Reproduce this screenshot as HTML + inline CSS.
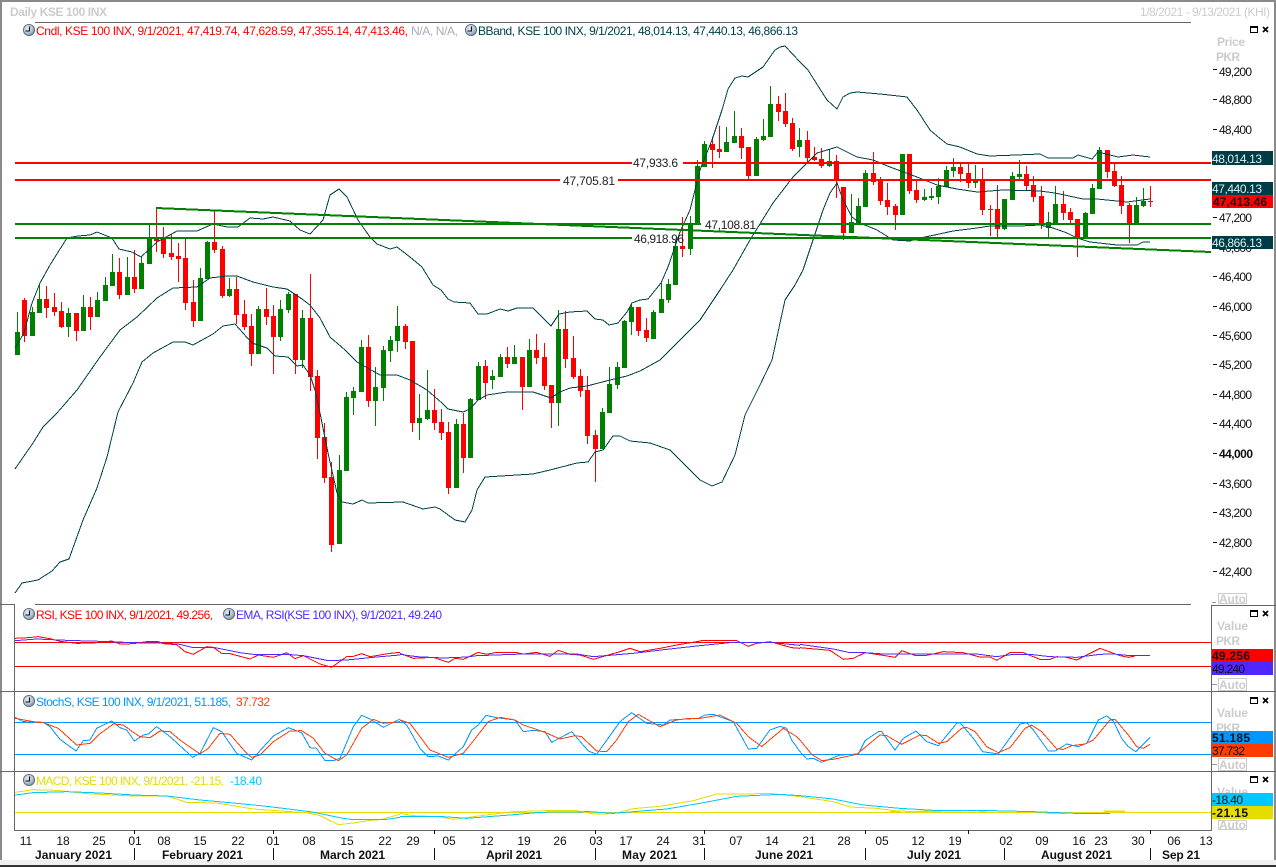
<!DOCTYPE html>
<html><head><meta charset="utf-8"><title>KSE 100 INX</title>
<style>
html,body{margin:0;padding:0;background:#fff}
svg{display:block;font-family:"Liberation Sans",sans-serif;font-size:12px}
.b{font-weight:bold}
.g{fill:#ccc}
.n{vector-effect:non-scaling-stroke}
polyline{fill:none;vector-effect:non-scaling-stroke}
</style></head><body>
<svg xmlns="http://www.w3.org/2000/svg" width="1276" height="867" viewBox="0 0 1276 867" shape-rendering="crispEdges">
<defs><radialGradient id="c" cx="40%" cy="35%" r="70%"><stop offset="0" stop-color="#e6ecf4"/><stop offset=".6" stop-color="#b4c2d2"/><stop offset="1" stop-color="#6c7f96"/></radialGradient>
<g id="k" shape-rendering="auto"><circle r="5.6" fill="url(#c)" stroke="#5a6a7c" stroke-width=".9"/><path d="M0.5 -3.5V1H-3.5" fill="none" stroke="#111" stroke-width="1.1"/></g>
<g id="w"><rect x="1250.5" y=".5" width="7" height="6" fill="none" stroke="#000"/><rect x="1250" y="0" width="8" height="2" fill="#000"/><path d="M1263 1l5 5M1268 1l-5 5" stroke="#000" stroke-width="1.6" shape-rendering="auto"/></g>
</defs>

<!-- Frame -->
<rect width="1276" height="867" fill="#fff"/>
<rect x="0" y="0" width="1276" height="2" fill="#8a8a8a"/>
<rect x="0" y="0" width="2" height="867" fill="#8a8a8a"/>
<rect x="1274" y="0" width="2" height="867" fill="#8a8a8a"/>
<rect x="0" y="860" width="1276" height="5" fill="#f0f0f0"/>
<rect x="0" y="865" width="1276" height="2" fill="#333"/>
<rect x="35" y="22" width="1156" height="1" fill="#666"/>
<text x="10" y="16" class="b g" textLength="97">Daily KSE 100 INX</text>
<text x="1140" y="16" class="g" textLength="130">1/8/2021 - 9/13/2021 (KHI)</text>

<!-- Candles -->
<path stroke="#007f00" stroke-width="1" fill="none" d="M17.5 312V355M32.5 307V336M39.5 285V313M68.5 308V337M83.5 295V331M97.5 292V317M105.5 277V301M112.5 254V286M127.5 257V295M141.5 257V289M149.5 225V264M200.5 268V321M207.5 241V279M229.5 278V297M258.5 306V354M280.5 300V341M288.5 292V313M302.5 310V368M339.5 455V544M346.5 392V471M353.5 387V415M361.5 340V392M375.5 367V426M383.5 346V401M390.5 336V362M397.5 306V352M419.5 394V440M427.5 370V420M456.5 419V488M470.5 398V458M478.5 362V400M492.5 370V389M500.5 354V377M514.5 345V364M529.5 339V387M558.5 310V426M602.5 408V449M609.5 367V413M617.5 362V389M624.5 320V368M631.5 303V335M653.5 310V339M661.5 283V313M668.5 279V303M675.5 240V285M690.5 216V255M697.5 160V224M704.5 141V167M726.5 127V152M734.5 111V143M756.5 137V176M763.5 119V141M770.5 86V137M799.5 128V157M829.5 149V167M851.5 194V233M858.5 198V223M865.5 170V207M902.5 154V215M924.5 189V201M931.5 188V200M938.5 178V204M946.5 166V187M953.5 158V177M975.5 165V188M1004.5 199V230M1012.5 172V200M1019.5 160V179M1048.5 212V237M1055.5 186V224M1085.5 212V238M1092.5 184V214M1099.5 147V189M1136.5 197V224M1143.5 188V207"/>
<path stroke="#007f00" stroke-width="5" fill="none" d="M17.5 332V355M32.5 312V336M39.5 299V313M68.5 313V327M83.5 307V331M97.5 300V317M105.5 285V301M112.5 272V286M127.5 277V295M141.5 263V289M149.5 238V264M200.5 278V321M207.5 242V279M229.5 289V296M258.5 309V354M280.5 309V337M288.5 294V310M302.5 318V360M339.5 470V544M346.5 397V471M353.5 391V398M361.5 347V392M375.5 387V401M383.5 350V388M390.5 340V351M397.5 326V341M419.5 418V423M427.5 410V419M456.5 424V488M470.5 399V458M478.5 366V400M492.5 376V380M500.5 357V377M514.5 357V364M529.5 350V387M558.5 329V403M602.5 412V449M609.5 384V413M617.5 367V385M624.5 321V368M631.5 307V322M653.5 312V339M661.5 299V313M668.5 284V300M675.5 246V285M690.5 224V249M697.5 166V224M704.5 144V167M726.5 142V152M734.5 136V143M756.5 139V176M763.5 136V140M770.5 104V137M799.5 140V147M829.5 161V166M851.5 222V233M858.5 206V223M865.5 173V207M902.5 154V215M924.5 197V200M931.5 196V198M938.5 186V197M946.5 170V187M953.5 167V171M975.5 181V183M1004.5 199V229M1012.5 176V200M1019.5 174V177M1048.5 222V228M1055.5 204V224M1085.5 213V238M1092.5 188V214M1099.5 150V189M1136.5 205V224M1143.5 201V206"/>
<path stroke="#ff0000" stroke-width="1" fill="none" d="M24.5 298V342M46.5 286V318M54.5 293V316M61.5 302V328M76.5 313V341M90.5 297V330M119.5 258V299M134.5 250V293M156.5 207V252M163.5 227V258M171.5 234V260M178.5 243V282M185.5 239V310M193.5 280V327M214.5 211V253M222.5 246V298M236.5 277V324M244.5 300V330M251.5 314V366M266.5 288V325M273.5 305V374M295.5 294V374M310.5 274V391M317.5 370V459M324.5 423V483M331.5 462V552M368.5 335V407M405.5 324V349M412.5 341V432M434.5 389V430M441.5 409V440M448.5 422V494M463.5 413V473M485.5 360V399M507.5 347V368M522.5 357V410M536.5 334V364M544.5 343V390M551.5 385V428M565.5 311V368M573.5 336V379M580.5 369V397M587.5 376V444M595.5 430V482M638.5 307V336M646.5 318V342M682.5 217V257M712.5 137V168M719.5 126V158M741.5 128V159M748.5 147V179M778.5 96V121M785.5 93V127M792.5 118V151M807.5 131V163M814.5 147V161M821.5 148V168M836.5 155V198M843.5 187V240M873.5 152V185M880.5 177V205M887.5 183V215M895.5 204V230M909.5 154V194M916.5 180V203M960.5 163V182M968.5 163V188M982.5 168V215M990.5 205V236M997.5 185V237M1026.5 166V190M1033.5 176V202M1041.5 186V229M1063.5 191V220M1070.5 208V224M1077.5 219V257M1107.5 150V178M1114.5 163V187M1121.5 176V214M1129.5 203V243M1150.5 186V207"/>
<path stroke="#ff0000" stroke-width="5" fill="none" d="M24.5 300V336M46.5 299V308M54.5 307V312M61.5 311V327M76.5 313V331M90.5 307V317M119.5 272V295M134.5 277V289M156.5 238V241M163.5 238V254M171.5 253V257M178.5 256V259M185.5 258V303M193.5 302V321M214.5 242V250M222.5 249V296M236.5 289V315M244.5 314V327M251.5 326V354M266.5 309V317M273.5 316V337M295.5 294V360M310.5 318V377M317.5 376V438M324.5 437V478M331.5 477V545M368.5 347V401M405.5 326V342M412.5 341V423M434.5 410V423M441.5 422V433M448.5 432V488M463.5 424V458M485.5 366V383M507.5 357V364M522.5 357V387M536.5 350V358M544.5 357V386M551.5 385V403M565.5 329V359M573.5 358V377M580.5 376V391M587.5 390V436M595.5 435V449M638.5 307V331M646.5 330V338M682.5 246V249M712.5 144V150M719.5 149V152M741.5 136V148M748.5 147V176M778.5 104V112M785.5 111V124M792.5 123V149M807.5 140V158M814.5 157V160M821.5 159V166M836.5 161V180M843.5 187V233M873.5 173V182M880.5 181V201M887.5 200V207M895.5 206V215M909.5 154V191M916.5 190V200M960.5 167V174M968.5 173V183M982.5 180V210M990.5 209V210M997.5 209V229M1026.5 174V186M1033.5 185V197M1041.5 196V224M1063.5 204V213M1070.5 212V220M1077.5 219V238M1107.5 150V172M1114.5 171V186M1121.5 185V206M1129.5 205V224M1150.5 201V202"/>

<!-- Bollinger -->
<g stroke="#00404a" stroke-width="1">
<polyline points="15,348 24,333 32,303 40,283 50,265 67,238 78,236 90,235 97,232 112,238 119,249 132,252 141,257 157,242 177,231 197,231 213,224 227,227 238,227 250,218 263,219 273,217 290,221 300,230 310,234 323,220 330,195 339,189 347,197 358,220 370,237 377,244 390,249 397,247 410,257 422,267 433,285 441,290 448,299 454,302 470,303 478,314 487,314 500,309 508,311 517,308 533,308 551,326 559,314 570,312 587,311 595,319 603,320 609,325 618,323 627,312 632,303 640,300 648,299 661,283 668,267 680,232 690,210 700,170 712,140 722,110 728,89 735,78 742,76 748,77 763,67 775,50 780,47 785,46 800,62 808,70 813,78 827,100 837,109 843,97 850,93 857,92 880,94 907,97 917,110 930,130 937,136 947,144 960,147 977,154 990,156 1017,155 1040,154 1048,158 1073,158 1078,155 1092,159 1098,152 1118,157 1133,155 1150,157"/>
<polyline points="15,469 33,443 43,427 57,413 77,390 100,357 120,330 137,317 157,298 173,288 197,287 210,278 227,276 237,276 253,282 273,287 287,289 302,299 310,305 320,318 330,337 345,350 357,362 380,375 397,375 410,380 427,390 442,403 448,409 463,412 470,409 478,400 487,395 507,392 533,392 551,398 560,392 570,388 587,386 610,380 627,376 640,371 660,360 680,340 700,320 720,290 733,270 750,240 773,203 793,177 817,153 837,147 857,157 873,160 890,167 917,177 937,185 957,189 977,192 1003,190 1040,191 1055,193 1083,199 1097,199 1127,202 1150,199"/>
<polyline points="15,593 22,583 38,580 52,571 60,562 69,559 83,520 97,488 107,457 118,412 133,383 142,362 153,353 173,342 185,342 193,345 213,334 223,326 235,324 243,333 252,343 267,348 275,356 288,357 297,366 303,365 310,375 315,390 320,413 328,453 337,493 342,502 353,504 362,500 368,503 403,502 423,509 435,507 440,509 455,520 465,522 472,510 477,490 485,477 533,474 550,470 577,463 588,462 595,452 603,450 613,436 620,436 630,441 640,442 650,443 670,450 690,470 700,480 712,486 722,482 735,455 745,415 760,385 772,360 785,300 795,285 803,270 813,240 823,210 830,193 837,183 843,200 852,217 860,223 877,230 893,240 910,241 920,238 930,236 953,231 977,228 990,226 1020,226 1040,225 1053,228 1067,233 1077,238 1090,242 1117,245 1137,245 1143,242 1150,242"/>
</g>

<!-- Level lines -->
<path stroke="#ff0000" stroke-width="2" fill="none" d="M15 163H632M683 163H1211M15 180H560M618 180H1211"/>
<path stroke="#007f00" stroke-width="2" fill="none" d="M15 224H701M760 224H1211M15 238H632M693 238H1211"/>
<polyline stroke="#007f00" stroke-width="2" points="156,208 1211,252"/>
<g fill="#222">
<text x="633" y="167" textLength="45">47,933.6</text>
<text x="563" y="185" textLength="52">47,705.81</text>
<text x="705" y="229" textLength="51">47,108.81</text>
<text x="634" y="243" textLength="50">46,918.96</text>
</g>

<!-- Main legend -->
<use href="#k" x="29" y="30"/>
<text x="36" y="35" fill="#ff0000" textLength="372">Cndl, KSE 100 INX, 9/1/2021, 47,419.74, 47,628.59, 47,355.14, 47,413.46,</text>
<text x="411" y="35" fill="#aab" textLength="47">N/A, N/A,</text>
<use href="#k" x="471" y="30"/>
<text x="478" y="35" fill="#00404a" textLength="320">BBand, KSE 100 INX, 9/1/2021, 48,014.13, 47,440.13, 46,866.13</text>

<!-- Price axis -->
<text x="1217" y="46" class="b g" textLength="28">Price</text>
<text x="1216" y="61" class="b g" textLength="24">PKR</text>
<g fill="#111">
<path d="M1213 69h4v1h-4zM1213 99h4v1h-4zM1213 129h4v1h-4zM1213 217h4v1h-4zM1213 247h4v1h-4zM1213 276h4v1h-4zM1213 306h4v1h-4zM1213 335h4v1h-4zM1213 364h4v1h-4zM1213 394h4v1h-4zM1213 423h4v1h-4zM1213 453h4v1h-4zM1213 483h4v1h-4zM1213 512h4v1h-4zM1213 542h4v1h-4zM1213 571h4v1h-4z"/>
<text x="1219" y="76" textLength="33">49,200</text>
<text x="1219" y="104" textLength="33">48,800</text>
<text x="1219" y="134" textLength="33">48,400</text>
<text x="1219" y="222" textLength="33">47,200</text>
<text x="1219" y="252" textLength="33">46,800</text>
<text x="1219" y="281" textLength="33">46,400</text>
<text x="1219" y="311" textLength="33">46,000</text>
<text x="1219" y="340" textLength="33">45,600</text>
<text x="1219" y="369" textLength="33">45,200</text>
<text x="1219" y="399" textLength="33">44,800</text>
<text x="1219" y="428" textLength="33">44,400</text>
<text x="1219" y="458" class="b" textLength="34">44,000</text>
<text x="1219" y="488" textLength="33">43,600</text>
<text x="1219" y="517" textLength="33">43,200</text>
<text x="1219" y="547" textLength="33">42,800</text>
<text x="1219" y="576" textLength="33">42,400</text>
</g>
<rect x="1212" y="151" width="61" height="14" fill="#003c46"/>
<text x="1212" y="163" fill="#d8f0f0" textLength="50">48,014.13</text>
<rect x="1212" y="182" width="61" height="13" fill="#003c46"/>
<text x="1212" y="193" fill="#d8f0f0" textLength="50">47,440.13</text>
<rect x="1212" y="195" width="61" height="13" fill="#ff0000"/>
<text x="1213" y="206" class="b" fill="#111" textLength="54">47,413.46</text>
<rect x="1212" y="236" width="61" height="13" fill="#003c46"/>
<text x="1212" y="247" fill="#d8f0f0" textLength="50">46,866.13</text>
<use href="#w" y="26"/>

<!-- Pane borders -->
<g fill="#666">
<rect x="0" y="604" width="15" height="1"/><rect x="35" y="604" width="1156" height="1"/>
<rect x="1211" y="605" width="65" height="1"/>
<rect x="0" y="691" width="1276" height="1"/>
<rect x="0" y="771" width="1276" height="1"/>
<rect x="14" y="605" width="1" height="226"/>
<rect x="1211" y="605" width="1" height="226"/>
<rect x="14" y="830" width="1198" height="1"/>
</g>

<!-- RSI pane -->
<path stroke="#ff0000" stroke-width="1" fill="none" d="M15 642.5H1211M15 666.5H1211"/>
<g transform="translate(0,595) scale(.33333)">
<polyline stroke="#ff0000" stroke-width="1" points="45,130 85,128 115,125 150,131 180,139 230,145 280,144 335,138 360,147 400,146 440,140 475,140 490,146 530,149 555,170 580,178 620,155 640,157 665,175 690,176 750,192 775,180 820,187 860,173 885,191 910,182 960,207 995,217 1040,185 1060,184 1085,176 1110,185 1170,175 1200,172"/>
<polyline stroke="#5028ff" stroke-width="1" points="45,137 110,132 200,136 300,139 400,143 500,145 540,148 575,157 640,157 720,173 760,178 860,178 910,182 985,197 1040,195 1130,186 1200,180"/>
</g>
<g transform="translate(400,625) scale(.33333)">
<polyline stroke="#ff0000" stroke-width="1" points="0,85 40,100 100,97 145,112 165,100 190,103 235,82 260,88 290,82 350,83 370,87 410,82 450,94 475,76 510,88 540,90 580,103 660,80 690,70 720,80 780,70 830,60 890,50 910,46 1010,47 1045,64 1070,55 1110,50 1175,68 1200,70"/>
<polyline stroke="#5028ff" stroke-width="1" points="0,88 50,95 130,99 200,96 230,92 370,87 530,87 580,95 700,85 800,73 900,62 1000,52 1110,52 1200,61"/>
</g>
<g transform="translate(800,625) scale(.33333)">
<polyline stroke="#ff0000" stroke-width="1" points="0,68 90,76 130,103 160,100 195,83 230,88 285,97 305,77 345,91 380,91 430,80 490,83 540,96 570,96 590,106 630,83 670,83 720,103 750,103 770,95 800,97 830,105 900,70 960,92 985,97 1005,93"/>
<polyline stroke="#5028ff" stroke-width="1" points="0,58 100,72 150,83 195,83 250,87 400,87 530,87 590,95 640,88 690,88 750,95 830,97 900,88 940,87 980,91 1050,91"/>
</g>
<use href="#k" x="29" y="614"/>
<text x="36" y="619" fill="#ff0000" textLength="177">RSI, KSE 100 INX, 9/1/2021, 49.256,</text>
<use href="#k" x="229" y="614"/>
<text x="236" y="619" fill="#5028ff" textLength="206">EMA, RSI(KSE 100 INX), 9/1/2021, 49.240</text>
<text x="1217" y="630" class="b g" textLength="31">Value</text>
<text x="1216" y="645" class="b g" textLength="24">PKR</text>
<rect x="1212" y="649" width="61" height="13" fill="#ff0000"/>
<text x="1212" y="660" class="b" fill="#111" textLength="38">49.256</text>
<rect x="1212" y="662" width="61" height="13" fill="#5028ff"/>
<text x="1212" y="673" fill="#111" textLength="33">49.240</text>
<use href="#w" y="610"/>

<!-- Stochastics pane -->
<path stroke="#0096ff" stroke-width="1" fill="none" d="M15 722.5H1211M15 754.5H1211"/>
<g transform="translate(0,595) scale(.33333)">
<polyline stroke="#0096ff" stroke-width="1" points="45,367 70,380 130,382 150,395 180,433 228,468 250,437 270,435 290,400 335,378 360,398 380,405 403,438 430,420 445,417 470,395 510,425 578,487 600,475 640,398 665,410 710,475 755,495 820,423 865,398 905,413 930,458 950,460 975,497 1000,497 1020,490 1060,395 1085,361 1110,372 1150,397 1200,372"/>
<polyline stroke="#ff3c00" stroke-width="1" points="45,370 100,380 130,383 175,400 230,450 270,445 295,420 340,387 370,390 400,412 420,425 450,428 480,408 510,410 540,435 600,477 625,460 660,415 690,418 740,475 755,487 780,480 820,440 870,408 905,407 940,430 975,475 1015,497 1040,480 1085,400 1120,373 1150,385 1200,380"/>
</g>
<g transform="translate(400,625) scale(.33333)">
<polyline stroke="#0096ff" stroke-width="1" points="0,285 20,300 60,370 85,395 115,393 145,405 190,365 215,315 235,300 258,271 290,278 345,285 370,320 400,316 435,320 455,352 515,320 565,378 590,388 660,290 695,263 740,295 790,300 810,285 895,280 915,270 940,268 1000,290 1045,372 1070,370 1110,315 1140,304 1160,310 1175,345 1200,380"/>
<polyline stroke="#ff3c00" stroke-width="1" points="0,285 30,295 90,375 145,397 190,385 230,335 265,290 300,277 345,285 370,300 435,322 480,342 525,332 545,335 590,378 620,380 650,345 685,290 715,268 780,305 830,285 870,280 900,280 960,270 1010,295 1045,335 1085,365 1150,310 1190,335 1200,345"/>
</g>
<g transform="translate(800,625) scale(.33333)">
<polyline stroke="#0096ff" stroke-width="1" points="0,380 20,402 40,400 65,412 120,390 175,387 195,347 235,320 245,320 285,375 310,340 348,318 380,350 415,362 470,295 480,293 520,340 548,380 595,387 660,297 680,293 700,315 745,378 765,378 800,357 835,365 860,355 895,285 920,273 940,288 965,340 985,365 1008,380 1050,337"/>
<polyline stroke="#ff3c00" stroke-width="1" points="0,345 35,388 65,407 100,403 170,388 240,330 260,332 305,358 360,330 380,332 415,355 440,350 485,310 500,307 525,320 560,365 595,383 630,368 675,310 695,300 725,320 770,372 790,373 815,362 855,357 880,345 930,285 945,283 985,330 1010,365 1030,370 1050,358"/>
</g>
<use href="#k" x="29" y="701"/>
<text x="36" y="706" fill="#0096ff" textLength="195">StochS, KSE 100 INX, 9/1/2021, 51.185,</text>
<text x="236" y="706" fill="#ff3c00" textLength="34">37.732</text>
<text x="1217" y="717" class="b g" textLength="31">Value</text>
<text x="1216" y="732" class="b g" textLength="24">PKR</text>
<rect x="1212" y="731" width="61" height="13" fill="#0096ff"/>
<text x="1212" y="742" class="b" fill="#111" textLength="38">51.185</text>
<rect x="1212" y="744" width="61" height="13" fill="#ff3c00"/>
<text x="1212" y="755" fill="#111" textLength="33">37.732</text>
<use href="#w" y="697"/>

<!-- MACD pane -->
<path stroke="#e6dc00" stroke-width="1" fill="none" d="M15 812.5H1211"/>
<g transform="translate(0,595) scale(.33333)">
<polyline stroke="#e6dc00" stroke-width="1" points="45,592 100,584 170,586 260,596 400,603 500,603 560,622 650,624 760,642 870,650 920,653 960,662 1015,689 1060,684 1110,676 1140,674 1200,658"/>
<polyline stroke="#00c8ff" stroke-width="1" points="45,600 100,593 200,590 300,594 400,600 500,603 600,615 700,624 800,634 930,650 1030,670 1060,674 1160,673 1200,667"/>
</g>
<g transform="translate(400,625) scale(.33333)">
<polyline stroke="#e6dc00" stroke-width="1" points="0,565 40,572 115,575 160,583 220,575 340,560 470,556 530,557 580,567 640,566 700,551 780,544 880,527 950,507 1040,507 1110,505 1180,513 1200,515"/>
<polyline stroke="#00c8ff" stroke-width="1" points="0,575 130,575 200,580 330,570 420,562 570,560 640,565 700,560 800,552 900,535 1010,514 1140,508 1200,512"/>
</g>
<g transform="translate(800,625) scale(.33333)">
<polyline stroke="#e6dc00" stroke-width="1" points="0,515 100,530 150,546 230,550 290,558 360,560 500,562 1050,562"/>
<path stroke="#e6dc00" stroke-width="2" fill="none" class="n" d="M270 561H300M360 560H425M535 560H560M735 564H800M910 560H975"/>
<polyline stroke="#00c8ff" stroke-width="1" points="0,512 100,522 190,540 300,550 400,556 580,557 700,560 850,566 930,565"/>
</g>
<use href="#k" x="29" y="780"/>
<text x="36" y="785" fill="#e6dc00" textLength="188">MACD, KSE 100 INX, 9/1/2021, -21.15,</text>
<text x="230" y="785" fill="#00c8ff" textLength="32">-18.40</text>
<text x="1217" y="796" class="b g" textLength="31">Value</text>
<rect x="1212" y="793" width="61" height="13" fill="#00c8ff"/>
<text x="1212" y="804" fill="#111" textLength="31">-18.40</text>
<rect x="1212" y="806" width="61" height="13" fill="#e6dc00"/>
<text x="1212" y="817" class="b" fill="#111" textLength="36">-21.15</text>
<use href="#w" y="776"/>

<!-- Auto buttons -->
<g fill="none" stroke="#ccc">
<rect x="1218.5" y="593.5" width="28" height="10"/>
<rect x="1218.5" y="678.5" width="28" height="12"/>
<rect x="1218.5" y="758.5" width="28" height="12"/>
<rect x="1218.5" y="820.5" width="28" height="9"/>
</g>
<path d="M1212 602h4v1h-4zM1212 684h5v1h-5zM1212 764h5v1h-5z" fill="#999"/>
<g class="b g">
<text x="1219" y="603" textLength="27">Auto</text>
<text x="1219" y="689" textLength="27">Auto</text>
<text x="1219" y="769" textLength="27">Auto</text>
<text x="1219" y="829" textLength="27">Auto</text>
</g>

<!-- Date axis -->
<path fill="#111" d="M134 830h1v4h-1zM273 830h1v4h-1zM434 830h1v4h-1zM595 830h1v4h-1zM704 830h1v4h-1zM865 830h1v4h-1zM968 830h1v4h-1zM1150 830h1v4h-1zM134 848h1v12h-1zM273 848h1v12h-1zM434 848h1v12h-1zM595 848h1v12h-1zM704 848h1v12h-1zM865 848h1v12h-1zM1004 848h1v12h-1zM1150 848h1v12h-1z"/>
<g fill="#111" text-anchor="middle">
<text x="26" y="845">11</text><text x="63" y="845">18</text><text x="99" y="845">25</text><text x="135" y="845">01</text><text x="164" y="845">08</text><text x="200" y="845">15</text><text x="238" y="845">22</text><text x="273" y="845">01</text><text x="309" y="845">08</text><text x="347" y="845">15</text><text x="385" y="845">22</text><text x="413" y="845">29</text><text x="449" y="845">05</text><text x="487" y="845">12</text><text x="524" y="845">19</text><text x="560" y="845">26</text><text x="596" y="845">03</text><text x="626" y="845">17</text><text x="663" y="845">24</text><text x="699" y="845">31</text><text x="736" y="845">07</text><text x="772" y="845">14</text><text x="809" y="845">21</text><text x="844" y="845">28</text><text x="882" y="845">05</text><text x="918" y="845">12</text><text x="955" y="845">19</text><text x="1006" y="845">02</text><text x="1042" y="845">09</text><text x="1079" y="845">16</text><text x="1101" y="845">23</text><text x="1138" y="845">30</text><text x="1174" y="845">06</text><text x="1206" y="845">13</text>
</g>
<g class="b" fill="#111">
<text x="35" y="859" textLength="77">January 2021</text>
<text x="162" y="859" textLength="81">February 2021</text>
<text x="320" y="859" textLength="65">March 2021</text>
<text x="486" y="859" textLength="56">April 2021</text>
<text x="622" y="859" textLength="55">May 2021</text>
<text x="755" y="859" textLength="58">June 2021</text>
<text x="907" y="859" textLength="54">July 2021</text>
<text x="1041" y="859" textLength="71">August 2021</text>
<text x="1162" y="859" textLength="38">Sep 21</text>
</g>
</svg>
</body></html>
